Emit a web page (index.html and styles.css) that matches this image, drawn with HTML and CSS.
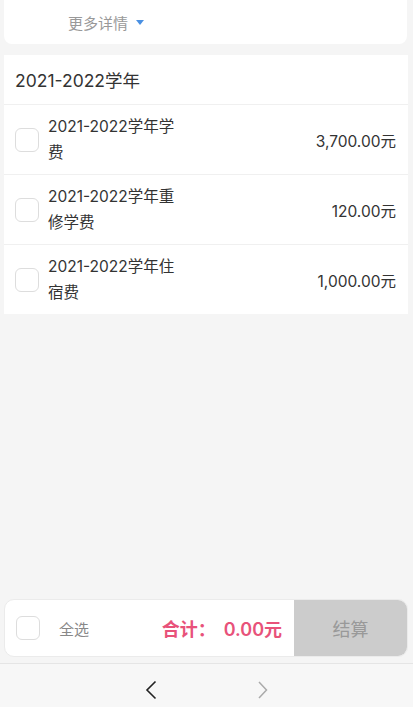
FILE: index.html
```html
<!DOCTYPE html>
<html lang="zh-CN">
<head>
  <meta charset="UTF-8">
  <title>缴费</title>
  <link rel="stylesheet" href="styles.css">
</head>
<body>
  <div class="page">
    <div class="more-card">
      <span class="more-text">更多详情</span>
      <span class="more-arrow"></span>
    </div>

    <div class="fee-card">
      <div class="fee-head">2021-2022学年</div>

      <div class="fee-row">
        <span class="check"></span>
        <div class="fee-name">2021-2022学年学费</div>
        <div class="fee-amount">3,700.00元</div>
      </div>

      <div class="fee-row">
        <span class="check"></span>
        <div class="fee-name">2021-2022学年重修学费</div>
        <div class="fee-amount">120.00元</div>
      </div>

      <div class="fee-row">
        <span class="check"></span>
        <div class="fee-name">2021-2022学年住宿费</div>
        <div class="fee-amount">1,000.00元</div>
      </div>
    </div>

    <div class="spacer"></div>

    <div class="pay-bar">
      <span class="check"></span>
      <span class="select-all">全选</span>
      <span class="total">合计：<span class="total-num">0.00元</span></span>
      <button class="pay-btn" type="button">结算</button>
    </div>

    <div class="nav-bar">
      <svg class="nav-icon" width="14" height="20" viewBox="0 0 14 20">
        <path d="M11.5 1.5 L3 10 L11.5 18.5" fill="none" stroke="#222" stroke-width="1.6"/>
      </svg>
      <svg class="nav-icon" width="14" height="20" viewBox="0 0 14 20">
        <path d="M3 2 L10.5 10 L3 18" fill="none" stroke="#aaa" stroke-width="1.5"/>
      </svg>
    </div>
  </div>
</body>
</html>
```

FILE: styles.css
```css
* {
  box-sizing: border-box;
  margin: 0;
  padding: 0;
}

body {
  background: #f5f5f5;
  font-family: Inter, "Noto Sans CJK SC", sans-serif;
  color: #333;
}

.page {
  height: 707px;
  display: flex;
  flex-direction: column;
}

.more-card {
  height: 44px;
  margin: 0 6px 0 4px;
  background: #fff;
  border-radius: 0 0 8px 8px;
  display: flex;
  align-items: center;
  padding-left: 64px;
}

.more-text {
  font-size: 15px;
  color: #999;
}

.more-arrow {
  width: 0;
  height: 0;
  margin-left: 8px;
  margin-top: 1px;
  border-left: 4px solid transparent;
  border-right: 4px solid transparent;
  border-top: 5px solid #4a90e2;
}

.fee-card {
  margin: 11px 5px 0 4px;
  background: #fff;
}

.fee-head {
  height: 50px;
  padding-left: 11px;
  display: flex;
  align-items: center;
  font-size: 17.5px;
  color: #333;
  border-bottom: 1px solid #f0f0f0;
}

.fee-row {
  height: 70px;
  display: flex;
  align-items: center;
  padding: 0 12px 0 11px;
  border-bottom: 1px solid #f0f0f0;
}

.fee-row:last-child {
  height: 69px;
  border-bottom: none;
}

.check {
  width: 24px;
  height: 24px;
  flex-shrink: 0;
  border: 1px solid #ddd;
  border-radius: 6px;
  background: #fff;
}

.fee-name {
  width: 136px;
  margin-left: 9px;
  font-size: 15.5px;
  line-height: 26px;
  color: #333;
}

.fee-amount {
  flex: 1;
  text-align: right;
  font-size: 15.5px;
  color: #333;
}

.spacer {
  flex: 1;
}

.pay-bar {
  height: 58px;
  margin: 0 5px 0 4px;
  background: #fff;
  border: 1px solid #ebebeb;
  border-radius: 10px;
  display: flex;
  align-items: center;
  padding-left: 11px;
  overflow: hidden;
}

.select-all {
  margin-left: 19px;
  font-size: 15px;
  color: #888;
}

.total {
  flex: 1;
  text-align: right;
  padding-right: 12px;
  font-size: 18px;
  font-weight: 600;
  color: #e8527a;
}

.total-num {
  margin-left: 8px;
}

.pay-btn {
  width: 113px;
  height: 100%;
  border: none;
  background: #cccccc;
  color: #999;
  font-family: inherit;
  font-size: 18px;
}

.nav-bar {
  height: 44px;
  margin-top: 6px;
  padding-top: 8px;
  border-top: 1px solid #e5e5e5;
  background: #f7f7f7;
  display: flex;
  align-items: center;
  justify-content: center;
  gap: 98px;
}
```
